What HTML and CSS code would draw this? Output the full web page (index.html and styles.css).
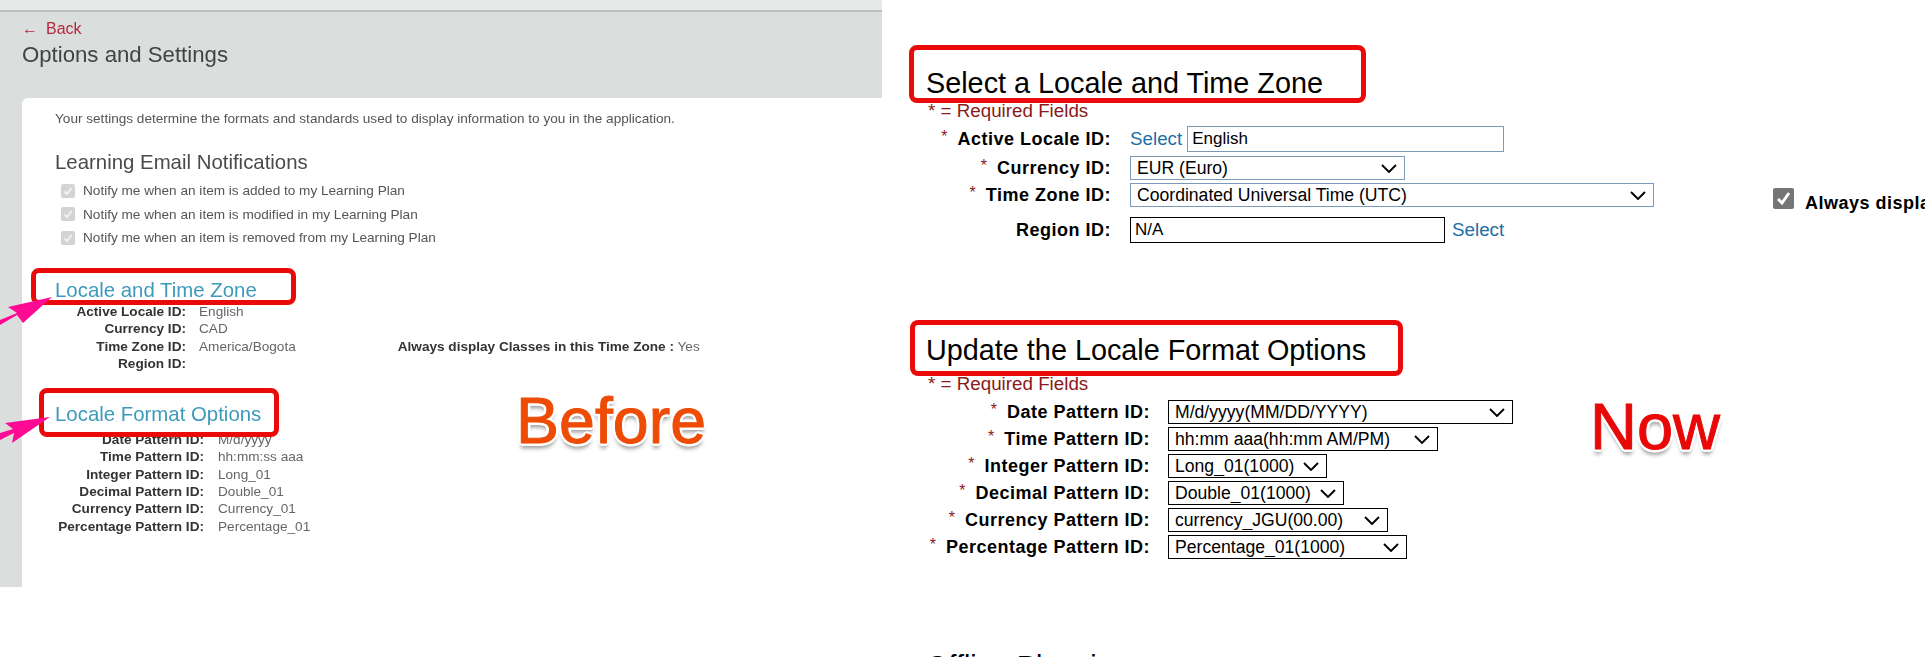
FILE: index.html
```html
<!DOCTYPE html>
<html lang="en">
<head>
<meta charset="utf-8">
<title>Options and Settings</title>
<link rel="stylesheet" href="styles.css">
</head>
<body>
<div class="compare">
  <section class="before">
    <div class="before-top"></div>
    <header class="before-head">
      <a class="back"><span class="back-arrow">←</span>Back</a>
      <h1>Options and Settings</h1>
    </header>
    <div class="card">
      <p class="intro">Your settings determine the formats and standards used to display information to you in the application.</p>
      <h2 class="card-title">Learning Email Notifications</h2>
      <ul class="notify">
        <li><svg class="tick" viewBox="0 0 14 14"><rect width="14" height="14" rx="2" fill="#d4d4d4"/><path d="M3.5 7.5l2.5 2.5 4.5-6" fill="none" stroke="#f2f2f2" stroke-width="2"/></svg>Notify me when an item is added to my Learning Plan</li>
        <li><svg class="tick" viewBox="0 0 14 14"><rect width="14" height="14" rx="2" fill="#d4d4d4"/><path d="M3.5 7.5l2.5 2.5 4.5-6" fill="none" stroke="#f2f2f2" stroke-width="2"/></svg>Notify me when an item is modified in my Learning Plan</li>
        <li><svg class="tick" viewBox="0 0 14 14"><rect width="14" height="14" rx="2" fill="#d4d4d4"/><path d="M3.5 7.5l2.5 2.5 4.5-6" fill="none" stroke="#f2f2f2" stroke-width="2"/></svg>Notify me when an item is removed from my Learning Plan</li>
      </ul>
      <h2 class="link-title first">Locale and Time Zone</h2>
      <dl class="facts facts-a">
        <dt>Active Locale ID:</dt><dd>English</dd>
        <dt>Currency ID:</dt><dd>CAD</dd>
        <dt>Time Zone ID:</dt><dd class="with-note">America/Bogota<span class="note"><b>Always display Classes in this Time Zone :</b> Yes</span></dd>
        <dt>Region ID:</dt><dd></dd>
      </dl>
      <h2 class="link-title second">Locale Format Options</h2>
      <dl class="facts facts-b">
        <dt>Date Pattern ID:</dt><dd>M/d/yyyy</dd>
        <dt>Time Pattern ID:</dt><dd>hh:mm:ss aaa</dd>
        <dt>Integer Pattern ID:</dt><dd>Long_01</dd>
        <dt>Decimal Pattern ID:</dt><dd>Double_01</dd>
        <dt>Currency Pattern ID:</dt><dd>Currency_01</dd>
        <dt>Percentage Pattern ID:</dt><dd>Percentage_01</dd>
      </dl>
    </div>
  </section>

  <section class="now">
    <h2 class="form-title">Select a Locale and Time Zone</h2>
    <p class="required"><span class="req-star">*</span> = Required Fields</p>
    <div class="form form-locale">
      <div class="row row-a">
        <label class="lbl"><span class="star">*</span>Active Locale ID:</label>
        <a class="link">Select</a><input class="inp inp-locale" value="English">
      </div>
      <div class="row row-b">
        <label class="lbl"><span class="star">*</span>Currency ID:</label>
        <select class="sel blue w-cur"><option>EUR (Euro)</option></select>
      </div>
      <div class="row row-c">
        <label class="lbl"><span class="star">*</span>Time Zone ID:</label>
        <select class="sel blue w-tz"><option>Coordinated Universal Time (UTC)</option></select>
        <span class="always"><svg class="always-box" viewBox="0 0 21 21"><rect width="21" height="21" rx="2" fill="#757575"/><path d="M5 11l4 4 7-10" fill="none" stroke="#fff" stroke-width="3"/></svg><b class="always-text">Always display Classes in this Time Zone</b></span>
      </div>
      <div class="row row-d">
        <label class="lbl">Region ID:</label>
        <input class="inp inp-region" value="N/A"><a class="link link-after">Select</a>
      </div>
    </div>

    <h2 class="form-title title-two">Update the Locale Format Options</h2>
    <p class="required required-two"><span class="req-star">*</span> = Required Fields</p>
    <div class="form form-format">
      <div class="row"><label class="lbl"><span class="star">*</span>Date Pattern ID:</label><select class="sel w-date"><option>M/d/yyyy(MM/DD/YYYY)</option></select></div>
      <div class="row"><label class="lbl"><span class="star">*</span>Time Pattern ID:</label><select class="sel w-time"><option>hh:mm aaa(hh:mm AM/PM)</option></select></div>
      <div class="row"><label class="lbl"><span class="star">*</span>Integer Pattern ID:</label><select class="sel w-int"><option>Long_01(1000)</option></select></div>
      <div class="row"><label class="lbl"><span class="star">*</span>Decimal Pattern ID:</label><select class="sel w-dec"><option>Double_01(1000)</option></select></div>
      <div class="row"><label class="lbl"><span class="star">*</span>Currency Pattern ID:</label><select class="sel w-money"><option>currency_JGU(00.00)</option></select></div>
      <div class="row"><label class="lbl"><span class="star">*</span>Percentage Pattern ID:</label><select class="sel w-pct"><option>Percentage_01(1000)</option></select></div>
    </div>
    <h2 class="form-title title-three">Offline Planning</h2>
  </section>

  <div class="mark mark-1"></div>
  <div class="mark mark-2"></div>
  <div class="mark mark-3"></div>
  <div class="mark mark-4"></div>
  <svg class="arrow arrow-1" viewBox="0 0 56 40"><path d="M0 30L17 23 8 17 52 7 23 33 17 25 0 35Z" fill="#ff0a93"/></svg>
  <svg class="arrow arrow-2" viewBox="0 0 56 40"><path d="M0 26L13 22 5 16 50 10 12 36 14 26 0 33Z" fill="#ff0a93"/></svg>
  <div class="stamp stamp-before">Before</div>
  <div class="stamp stamp-now">Now</div>
</div>
</body>
</html>
```

FILE: styles.css
```css
* { box-sizing: border-box; }
html, body { margin: 0; height: 657px; overflow: hidden; background: #fff; }
body { font-family: "Liberation Sans", Arial, sans-serif; color: #000; }
.compare { position: relative; display: flex; width: 1925px; height: 657px; overflow: hidden; }

/* left: old screenshot */
.before { flex: 0 0 882px; height: 587px; background: #dadedd; filter: blur(.45px); display: flex; flex-direction: column; }
.before-top { height: 12px; background: #e6e9e8; border-bottom: 2px solid #b9c1c4; flex: none; }
.before-head { height: 86px; padding: 8px 0 0 22px; flex: none; color: #444; }
.back { display: block; color: #b5293f; font-size: 16px; line-height: 18px; }
.back-arrow { margin-right: 8px; }
.before-head h1 { margin: 2px 0 0; font-size: 22.2px; line-height: 30px; font-weight: 400; color: #3f4446; }
.card { flex: 1; margin-left: 22px; background: #fff; border-radius: 6px 0 0 0; padding: 13px 0 0 33px; color: #666; }
.intro { margin: 0; font-size: 13.6px; line-height: 16px; color: #555; }
.card-title { margin: 23px 0 0; font-size: 20.4px; line-height: 24px; font-weight: 400; color: #4a4a4a; }
.notify { list-style: none; margin: 5px 0 0; padding: 0 0 0 6px; font-size: 13.6px; color: #555; }
.notify li { display: flex; align-items: center; height: 23.6px; }
.tick { width: 14px; height: 14px; margin-right: 8px; flex: none; }
.link-title { margin: 0; font-size: 20.4px; line-height: 24px; font-weight: 400; color: #3d9abb; }
.link-title.first { margin-top: 28px; }
.link-title.second { margin-top: 30px; }
.facts { display: grid; grid-auto-rows: 17.3px; margin: 1px 0 0; font-size: 13.6px; line-height: 17px; align-items: center; }
.facts dt { font-weight: 700; color: #333; text-align: right; }
.facts dd { margin: 0; color: #666; }
.facts-a { grid-template-columns: 131px 1fr; column-gap: 13px; margin-left: 0; }
.facts-b { grid-template-columns: 149px 1fr; column-gap: 14px; margin-top: 5px; }
.with-note { display: flex; }
.note { margin-left: 102px; white-space: nowrap; }
.note b { color: #333; }

/* right: current form */
.now { flex: 1; padding: 68px 0 0 44px; white-space: nowrap; min-width: 0; }
.form-title { margin: 0; font-size: 28.8px; line-height: 30px; font-weight: 400; color: #000; }
.title-two { margin-top: 92px; }
.title-three { margin-top: 92px; }
.required { margin: 3px 0 0 2px; font-size: 18.8px; line-height: 20px; color: #8b1a1a; }
.required-two { margin-top: 9px; }
.req-star { color: #8b1a1a; }
.form { margin-top: 5px; font-size: 18px; }
.row { display: flex; align-items: center; height: 24px; margin-bottom: 3px; }
.lbl { flex: none; text-align: right; font-weight: 700; letter-spacing: .5px; }
.star { color: #8b1a1a; font-weight: 400; font-size: 16px; margin-right: 10px; vertical-align: 3px; letter-spacing: 0; }
.form-locale .lbl { width: 185px; margin-right: 19px; }
.form-format .lbl { width: 224px; margin-right: 18px; }
.form-format { margin-top: 6px; }
.row-a { height: 26px; margin-bottom: 4px; }
.row-b { height: 24px; }
.row-d { margin-top: 10px; height: 26px; }
.link { color: #1d6fa5; font-size: 18.8px; flex: none; }
.link-after { margin-left: 7px; }
.inp { flex: none; height: 26px; font: 17px "Liberation Sans", Arial, sans-serif; padding: 0 0 0 4px; border-radius: 0; outline: none; color: #000; }
.inp-locale { width: 317px; margin-left: 5px; border: 1px solid #7a9ab8; }
.inp-region { width: 315px; border: 1px solid #000; }
.sel { flex: none; appearance: none; -webkit-appearance: none; height: 24px; font: 17.6px "Liberation Sans", Arial, sans-serif; color: #000; border: 1px solid #000; border-radius: 0; padding: 0 0 0 6px; background: #fff url("data:image/svg+xml,%3Csvg xmlns='http://www.w3.org/2000/svg' viewBox='0 0 16 9'%3E%3Cpath d='M1 1l7 7 7-7' fill='none' stroke='%23000' stroke-width='1.9'/%3E%3C/svg%3E") no-repeat right 7px center / 16px 9px; }
.sel.blue { border-color: #7a9ab8; }
.w-cur { width: 275px; }
.w-tz { width: 524px; }
.w-date { width: 345px; }
.w-time { width: 270px; }
.w-int { width: 159px; }
.w-dec { width: 176px; }
.w-money { width: 220px; }
.w-pct { width: 239px; }
.always { display: inline-flex; align-items: flex-start; align-self: flex-start; margin: 5px 0 0 119px; font-size: 18px; letter-spacing: .5px; }
.always-box { width: 21px; height: 21px; margin-right: 11px; flex: none; }
.always-text { margin-top: 5px; line-height: 21px; }

/* annotations laid over the picture */
.mark { position: absolute; border: 5px solid #ea0a0a; border-radius: 8px; pointer-events: none; }
.mark-1 { left: 31px; top: 268px; width: 265px; height: 37px; }
.mark-2 { left: 39px; top: 388px; width: 240px; height: 49px; }
.mark-3 { left: 909px; top: 45px; width: 457px; height: 58px; }
.mark-4 { left: 910px; top: 320px; width: 493px; height: 56px; }
.arrow { position: absolute; width: 56px; height: 40px; }
.arrow-1 { left: 0; top: 290px; }
.arrow-2 { left: 0; top: 407px; }
.stamp { position: absolute; font-weight: 400; -webkit-text-stroke: 1px currentColor; line-height: 1; text-shadow: 0 0 1px #fff, 3px 0 0 #fff, -3px 0 0 #fff, 0 3px 0 #fff, 0 -3px 0 #fff, 2px 2px 0 #fff, -2px 2px 0 #fff, 2px -2px 0 #fff, -2px -2px 0 #fff, 0 5px 4px rgba(0,0,0,.45); }
.stamp-before { left: 516px; top: 389px; font-size: 64.5px; color: #ee4b05; }
.stamp-now { left: 1590px; top: 394px; font-size: 65px; color: #e80808; }
```
